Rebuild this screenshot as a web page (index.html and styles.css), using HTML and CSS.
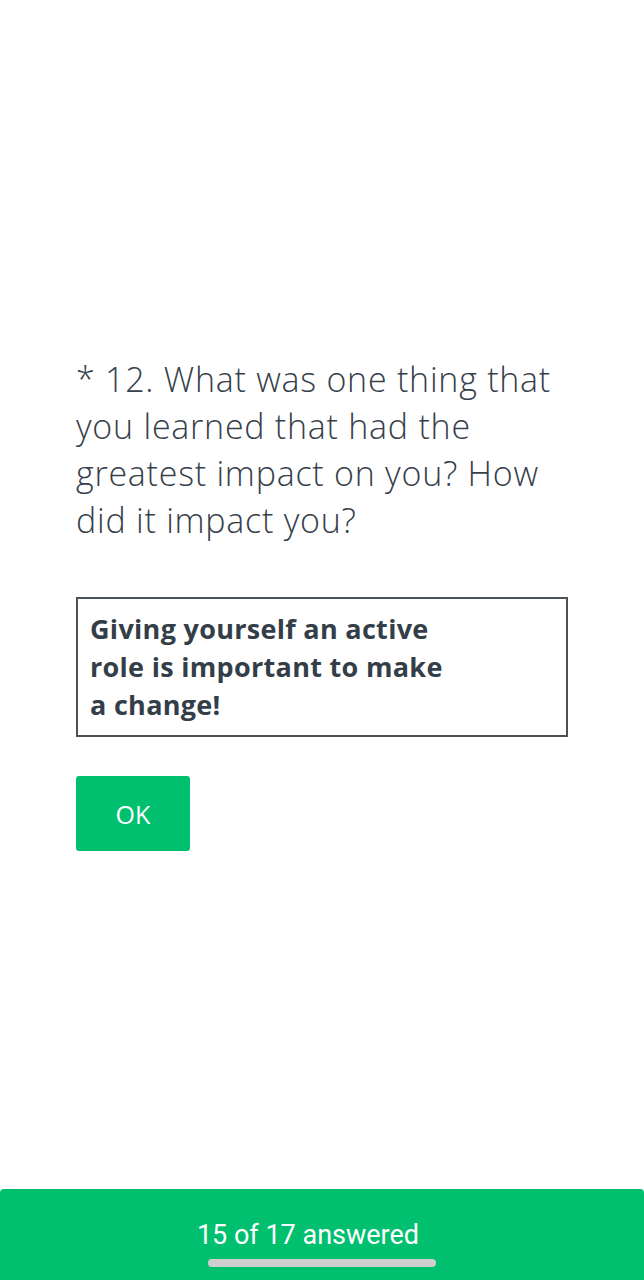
FILE: index.html
```html
<!DOCTYPE html>
<html>
<head>
<meta charset="utf-8">
<link rel="stylesheet" href="styles.css">
</head>
<body>
<main class="survey">
  <h1 class="question">* 12. What was one thing that<br>you learned that had the<br>greatest impact on you? How<br>did it impact you?</h1>
  <div class="answer">Giving yourself an active<br>role is important to make<br>a change!</div>
  <button class="ok">OK</button>
</main>
<footer class="progress">
  <div class="progress-text">15 of 17 answered</div>
  <div class="home-bar"></div>
</footer>
</body>
</html>
```
FILE: styles.css
```css
html, body {
  margin: 0;
  padding: 0;
  background: #ffffff;
}
body {
  width: 644px;
  height: 1280px;
  display: flex;
  flex-direction: column;
  font-family: "Open Sans", "Liberation Sans", sans-serif;
  color: #333e48;
}
.survey {
  flex: 1;
  padding: 356px 76px 0 76px;
  display: flex;
  flex-direction: column;
  align-items: flex-start;
}
.question {
  margin: 0;
  font-weight: 300;
  font-size: 34px;
  line-height: 47px;
  letter-spacing: 0.75px;
  white-space: nowrap;
  color: #36404a;
}
.answer {
  margin-top: 53px;
  box-sizing: border-box;
  width: 492px;
  height: 140px;
  border: 2px solid #4b525a;
  padding: 11px 12px;
  font-weight: 700;
  font-size: 27px;
  line-height: 38px;
  letter-spacing: 0.3px;
  color: #333e48;
}
.ok {
  margin-top: 39px;
  width: 114px;
  height: 75px;
  border: none;
  border-radius: 3px;
  background: #00bf6f;
  color: #ffffff;
  font-family: "Open Sans", "Liberation Sans", sans-serif;
  font-size: 25px;
  font-weight: 400;
  padding: 0;
}
.progress {
  height: 91px;
  background: #00bf6f;
  border-radius: 4px 4px 0 0;
  display: flex;
  flex-direction: column;
  align-items: center;
  padding-top: 30px;
  box-sizing: border-box;
}
.progress-text {
  font-family: Roboto, "Liberation Sans", sans-serif;
  font-size: 27px;
  line-height: 32px;
  color: #ffffff;
  margin-right: 28px;
}
.home-bar {
  margin-top: 8px;
  width: 228px;
  height: 8px;
  border-radius: 4px;
  background: #cfcfcf;
}
```
